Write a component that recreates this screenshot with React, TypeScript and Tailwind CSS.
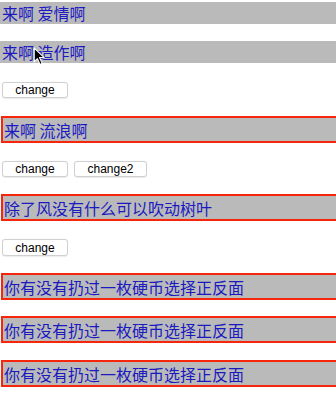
import React from "react";

const cjk = { fontFamily: '"Noto Sans CJK SC", "Noto Sans", sans-serif' };

const PlainBar = ({ text, className }: { text: string; className: string }) => (
  <div
    className={`h-[22px] w-full bg-[#bababa] text-[16px] leading-[23px] text-[#1a1ac0] pl-[2px] ${className}`}
    style={cjk}
  >
    {text}
  </div>
);

const RedBar = ({ text, className }: { text: string; className: string }) => (
  <div
    className={`h-[27px] ml-px w-[360px] min-w-[360px] shrink-0 border-2 border-r-0 border-[#f5260c] bg-[#bababa] text-[16px] leading-[24px] text-[#1a1ac0] pl-px ${className}`}
    style={cjk}
  >
    {text}
  </div>
);

const Btn = ({ label, w }: { label: string; w: string }) => (
  <button
    className={`${w} h-[16px] rounded-[3px] border border-[#d0d0d0] bg-white text-[12px] leading-[14px] text-black shadow-[0_0.5px_1px_rgba(0,0,0,0.08)]`}
    style={{ fontFamily: '"Liberation Sans", Arial, sans-serif' }}
  >
    {label}
  </button>
);

export default function App() {
  return (
    <div className="relative w-full max-w-[336px] h-[397px] overflow-hidden bg-white pt-[2px] flex flex-col items-start">
      <PlainBar text="来啊 爱情啊" className="" />
      <PlainBar text="来啊 造作啊" className="mt-[17px]" />
      <div className="mt-[19px] flex gap-[6px] pl-[2px]">
        <Btn label="change" w="w-[66px]" />
      </div>
      <RedBar text="来啊 流浪啊" className="mt-[18px]" />
      <div className="mt-[18px] flex gap-[6px] pl-[2px]">
        <Btn label="change" w="w-[66px]" />
        <Btn label="change2" w="w-[73px]" />
      </div>
      <RedBar text="除了风没有什么可以吹动树叶" className="mt-[17px]" />
      <div className="mt-[18px] flex gap-[6px] pl-[2px]">
        <Btn label="change" w="w-[66px] h-[17px]" />
      </div>
      <RedBar text="你有没有扔过一枚硬币选择正反面" className="mt-[17px]" />
      <RedBar text="你有没有扔过一枚硬币选择正反面" className="mt-[16px]" />
      <RedBar text="你有没有扔过一枚硬币选择正反面" className="mt-[17px]" />

      {/* mouse pointer */}
      <svg
        className="absolute left-[33px] top-[47px]"
        width="13"
        height="19"
        viewBox="0 0 12 18"
      >
        <path
          d="M1 1 L1 14 L4 11 L6.5 16.5 L8.5 15.5 L6 10 L10.5 10 Z"
          fill="#000"
          stroke="#fff"
          strokeWidth="1"
          strokeLinejoin="round"
        />
      </svg>
    </div>
  );
}
